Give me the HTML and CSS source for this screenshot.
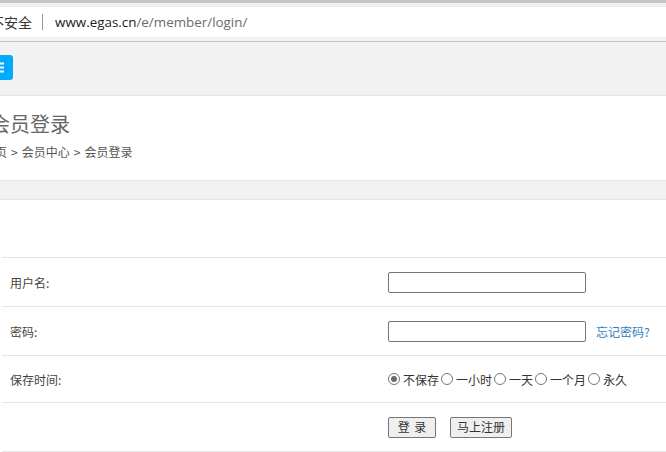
FILE: index.html
```html
<!DOCTYPE html>
<html lang="zh-CN">
<head>
<meta charset="utf-8">
<title>会员登录</title>
<link rel="stylesheet" href="styles.css">
</head>
<body>
<div class="chrome">
  <div class="chrome-top"></div>
  <div class="addr">
    <span class="insecure">不安全</span>
    <span class="sep"></span>
    <span class="url"><span class="host">www.egas.cn</span>/e/member/login/</span>
  </div>
  <div class="chrome-bottom"></div>
</div>
<header class="nav">
  <button class="menu-btn" type="button" aria-label="菜单">
    <svg width="30" height="25" viewBox="0 0 30 25"><g stroke="#fff" stroke-width="2"><line x1="9" y1="8.5" x2="21" y2="8.5"/><line x1="9" y1="12.5" x2="21" y2="12.5"/><line x1="9" y1="16.5" x2="21" y2="16.5"/></g></svg>
  </button>
</header>
<section class="heading">
  <h1 class="title">会员登录</h1>
  <div class="crumbs">首页<span class="gt">&gt;</span>会员中心<span class="gt">&gt;</span>会员登录</div>
</section>
<div class="band"></div>
<main class="form">
  <div class="row">
    <div class="label">用户名:</div>
    <div class="value"><input class="field" type="text"></div>
  </div>
  <div class="row">
    <div class="label">密码:</div>
    <div class="value"><input class="field" type="password"><a class="forgot" href="#">忘记密码?</a></div>
  </div>
  <div class="row row-short">
    <div class="label">保存时间:</div>
    <div class="value radios">
      <label class="opt"><span class="radio checked"></span>不保存</label>
      <label class="opt"><span class="radio"></span>一小时</label>
      <label class="opt"><span class="radio"></span>一天</label>
      <label class="opt"><span class="radio"></span>一个月</label>
      <label class="opt"><span class="radio"></span>永久</label>
    </div>
  </div>
  <div class="row">
    <div class="label"></div>
    <div class="value buttons">
      <button class="btn btn-login" type="button">登 录</button>
      <button class="btn" type="button">马上注册</button>
    </div>
  </div>
</main>
</body>
</html>
```
FILE: styles.css
```css
html, body {
  margin: 0;
  padding: 0;
  background: #fff;
  overflow: hidden;
}
body {
  font-family: "Noto Sans CJK SC", "Noto Sans", sans-serif;
  color: #333;
  width: 666px;
}
.chrome-top {
  height: 3px;
  background: #c6c6c6;
  border-bottom: 4px solid #f1f1f1;
}
.addr {
  height: 30px;
  display: flex;
  align-items: center;
  background: #fff;
  font-size: 14px;
}
.insecure {
  margin-left: -10px;
  color: #333;
}
.sep {
  width: 1px;
  height: 16px;
  background: #9a9a9a;
  margin: 0 12px 0 10px;
}
.url {
  font-family: "Open Sans", "Noto Sans", sans-serif;
  color: #6b6b6b;
  font-size: 13.4px;
}
.host {
  color: #202124;
}
.chrome-bottom {
  height: 4px;
  background: #f1f1f1;
  border-bottom: 1px solid #c6c6c6;
}
.nav {
  height: 53px;
  background: #f2f2f2;
  border-bottom: 1px solid #e6e6e6;
  display: flex;
  align-items: flex-start;
}
.menu-btn {
  margin: 13px 0 0 -17px;
  width: 30px;
  height: 25px;
  padding: 0;
  border: 0;
  border-radius: 3px;
  background: #00aaff;
  display: block;
}
.menu-btn svg { display: block; }
.heading {
  height: 84px;
  box-sizing: border-box;
  padding-top: 13px;
}
.title {
  margin: 0 0 0 -10px;
  font-size: 20px;
  line-height: 30px;
  font-weight: normal;
  color: #666;
}
.crumbs {
  margin: 3px 0 0 -17px;
  font-size: 12px;
  line-height: 20px;
  color: #555;
}
.gt {
  margin: 0 4px;
}
.band {
  height: 18px;
  background: #f2f2f2;
  border-top: 1px solid #e6e6e6;
  border-bottom: 1px solid #e6e6e6;
}
.form {
  padding-top: 57px;
  margin-left: 2px;
  border-bottom: 1px solid #e6e6e6;
}
.row {
  display: grid;
  grid-template-columns: 386px 1fr;
  height: 48px;
  border-top: 1px solid #e6e6e6;
  font-size: 12px;
}
.row-short { height: 46px; }
.label {
  padding-left: 8px;
  display: flex;
  align-items: center;
  color: #444;
}
.value {
  display: flex;
  align-items: center;
}
.field {
  box-sizing: border-box;
  width: 198px;
  height: 21px;
  margin: 0;
  border: 1px solid #767676;
  border-radius: 2px;
  background: #fff;
}
.forgot {
  margin-left: 10px;
  color: #2f7dc0;
  text-decoration: none;
}
.radios { color: #333; }
.opt {
  display: flex;
  align-items: center;
  margin-right: 2px;
}
.radio {
  box-sizing: border-box;
  width: 12px;
  height: 12px;
  border: 1px solid #767676;
  border-radius: 50%;
  background: #fff;
  margin-right: 3px;
  position: relative;
}
.radio.checked::after {
  content: "";
  position: absolute;
  left: 2px;
  top: 2px;
  width: 6px;
  height: 6px;
  border-radius: 50%;
  background: #6b6b6b;
}
.buttons { gap: 14px; }
.btn {
  box-sizing: border-box;
  height: 21px;
  margin: 0;
  padding: 0 6px;
  border: 1px solid #767676;
  border-radius: 2px;
  background: #efefef;
  font-family: "Noto Sans CJK SC", sans-serif;
  font-size: 12px;
  color: #333;
  line-height: 1;
  word-spacing: 2px;
}
.btn-login { width: 48px; padding: 0; }
```
